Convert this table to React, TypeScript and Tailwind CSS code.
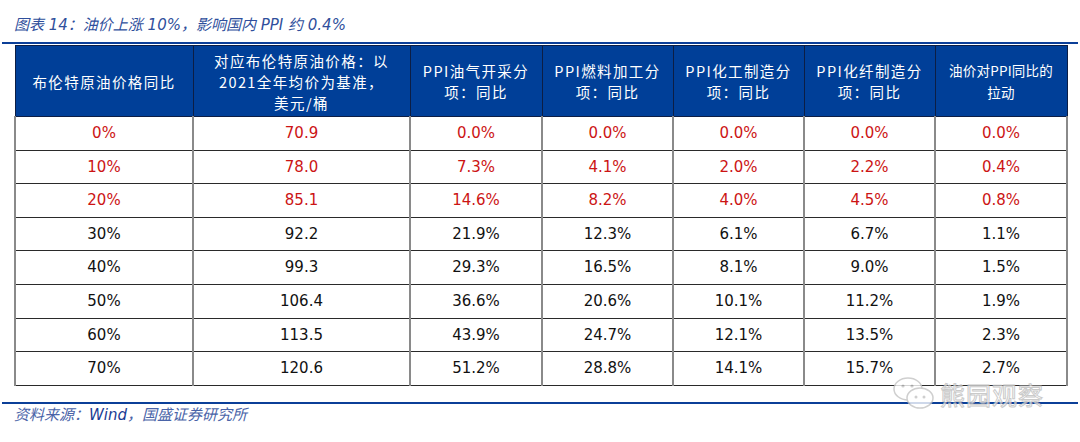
import React from "react";

const headers: React.ReactNode[] = [
  "布伦特原油价格同比",
  <>
    对应布伦特原油价格：以
    <br />
    2021全年均价为基准，
    <br />
    美元/桶
  </>,
  <>
    PPI油气开采分
    <br />
    项：同比
  </>,
  <>
    PPI燃料加工分
    <br />
    项：同比
  </>,
  <>
    PPI化工制造分
    <br />
    项：同比
  </>,
  <>
    PPI化纤制造分
    <br />
    项：同比
  </>,
  <span className="tracking-[0.2px] text-[13.5px]">
    油价对PPI同比的
    <br />
    拉动
  </span>,
];

const widths = ["w-[178px]", "w-[217px]", "w-[132px]", "w-[131px]", "w-[131px]", "w-[131px]", "w-[132px]"];

const rows = [
  ["0%", "70.9", "0.0%", "0.0%", "0.0%", "0.0%", "0.0%"],
  ["10%", "78.0", "7.3%", "4.1%", "2.0%", "2.2%", "0.4%"],
  ["20%", "85.1", "14.6%", "8.2%", "4.0%", "4.5%", "0.8%"],
  ["30%", "92.2", "21.9%", "12.3%", "6.1%", "6.7%", "1.1%"],
  ["40%", "99.3", "29.3%", "16.5%", "8.1%", "9.0%", "1.5%"],
  ["50%", "106.4", "36.6%", "20.6%", "10.1%", "11.2%", "1.9%"],
  ["60%", "113.5", "43.9%", "24.7%", "12.1%", "13.5%", "2.3%"],
  ["70%", "120.6", "51.2%", "28.8%", "14.1%", "15.7%", "2.7%"],
];

function Watermark() {
  return (
    <div className="absolute left-[892px] top-[375px] flex items-center gap-[4px] opacity-80 pointer-events-none whitespace-nowrap">
      <svg width="44" height="38" viewBox="0 0 44 38">
        <ellipse cx="16" cy="14" rx="14" ry="11" fill="#fff" stroke="#c4c4c4" strokeWidth="1.5" />
        <circle cx="11" cy="11" r="1.6" fill="#c4c4c4" />
        <circle cx="20" cy="11" r="1.6" fill="#c4c4c4" />
        <ellipse cx="28" cy="23" rx="13" ry="10" fill="#fff" stroke="#c4c4c4" strokeWidth="1.5" />
        <circle cx="24" cy="22" r="1.5" fill="#c4c4c4" />
        <circle cx="32" cy="22" r="1.5" fill="#c4c4c4" />
      </svg>
      <span className="text-[25px] leading-none text-white tracking-[1px] [-webkit-text-stroke:1px_#bdbdbd] [font-family:'Noto_Sans_CJK_SC',sans-serif]">
        熊园观察
      </span>
    </div>
  );
}

export default function App() {
  return (
    <div className="relative w-[1080px] h-[442px] bg-white overflow-hidden [font-family:'DejaVu_Sans','Noto_Sans_CJK_SC',sans-serif]">
      <div className="pl-[14px] pt-[15px] h-[42px] text-[15px] leading-[20px] italic text-[#2f4f9c] whitespace-nowrap [font-family:'DejaVu_Sans','Noto_Sans_CJK_SC',sans-serif]">
        图表 14：油价上涨 10%，影响国内 PPI 约 0.4%
      </div>
      <div className="mx-[2px] h-[2px] bg-[#0b3f98]" />
      <div className="pl-[14px] pt-[1px]">
        <table className="border-collapse table-fixed w-[1052px]">
          <thead>
            <tr className="h-[71px] bg-[#003f98]">
              {headers.map((h, i) => (
                <th
                  key={i}
                  className={`${widths[i]} border border-[#0c1e45] px-0 whitespace-nowrap text-[14.5px] leading-[21px] tracking-[1.4px] font-normal text-white [font-family:'Noto_Sans_CJK_SC',sans-serif]`}
                >
                  {h}
                </th>
              ))}
            </tr>
          </thead>
          <tbody>
            {rows.map((r, ri) => (
              <tr key={ri} className="h-[33.6px]">
                {r.map((c, ci) => (
                  <td
                    key={ci}
                    className={`border-y border-y-[#2a2a2a] border-x-2 border-x-[#8a8a8a] text-center text-[15px] ${
                      ri < 3 ? "text-[#cc1414]" : "text-[#111]"
                    }`}
                  >
                    {c}
                  </td>
                ))}
              </tr>
            ))}
          </tbody>
        </table>
      </div>
      <div className="mx-[2px] mt-[16px] h-[2px] bg-[#0b3f98]" />
      <div className="pl-[14px] pt-[1px] text-[15px] leading-[20px] italic text-[#4a64a8] whitespace-nowrap [font-family:'DejaVu_Sans','Noto_Sans_CJK_SC',sans-serif]">
        资料来源：<span className="text-[#1a3c94]">Wind</span>，国盛证券研究所
      </div>
      <Watermark />
    </div>
  );
}
